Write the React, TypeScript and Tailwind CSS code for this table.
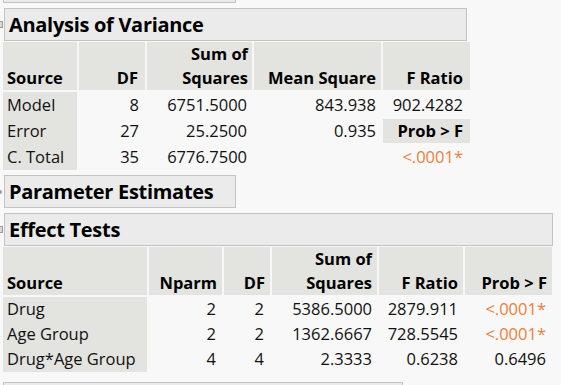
import React from "react";

const font = { fontFamily: '"Open Sans", "Noto Sans", sans-serif' };

function SectionHeader({ title, width, icon }: { title: string; width: string; icon: "box" | "dot" }) {
  return (
    <div className="flex items-center">
      <div className="flex w-[4px] justify-start">
        {icon === "box" ? (
          <div className="h-[7px] w-[3px] border border-l-0 border-[#9a9a9a] bg-[#d8d8d8]" />
        ) : (
          <div className="h-[4px] w-[2px] rounded-r-full bg-[#9a9a9a]" />
        )}
      </div>
      <div
        className={`flex h-[33px] items-center border border-[#c3c3c3] bg-[#ebebeb] pl-[4px] text-[20px] font-bold tracking-[-0.3px] text-black ${width}`}
      >
        {title}
      </div>
    </div>
  );
}

function HeadCell({ children, className = "" }: { children: React.ReactNode; className?: string }) {
  return (
    <div
      className={`flex h-[48px] flex-col items-end justify-end bg-[#e3e3df] text-[16.5px] font-bold leading-[24px] text-black ${className}`}
    >
      {children}
    </div>
  );
}

const orange = "text-[#e8823a]";

export default function App() {
  return (
    <div className="h-[385px] w-[561px] overflow-hidden bg-[#f8f8f8]" style={font}>
      <div className="ml-[3px] h-[3px] w-[233px] border-x border-b border-[#c3c3c3] bg-[#ebebeb]" />

      <div className="mt-[5px]">
        <SectionHeader title="Analysis of Variance" width="w-[463px]" icon="box" />
      </div>

      {/* Analysis of Variance table */}
      <div className="ml-[3px] mt-[1px] grid grid-cols-[74px_66px_105px_127px_87px] gap-x-[2px] text-[16.5px] text-[#111]">
        <HeadCell className="!items-start pl-[4px]">Source</HeadCell>
        <HeadCell className="pr-[7px]">DF</HeadCell>
        <HeadCell className="pr-[4px]">
          <span>Sum of</span>
          <span>Squares</span>
        </HeadCell>
        <HeadCell className="pr-[5px]">Mean Square</HeadCell>
        <HeadCell className="pr-[7px]">F Ratio</HeadCell>

        <div className="col-span-5 h-[2px]" />

        {[
          ["Model", "8", "6751.5000", "843.938", "902.4282"],
          ["Error", "27", "25.2500", "0.935", "prob"],
          ["C. Total", "35", "6776.7500", "", "sig"],
        ].map((r) => (
          <React.Fragment key={r[0]}>
            <div className="flex h-[26px] items-center bg-[#e3e3df] pl-[4px]">{r[0]}</div>
            <div className="flex h-[26px] items-center justify-end pr-[6px]">{r[1]}</div>
            <div className="flex h-[26px] items-center justify-end pr-[5px]">{r[2]}</div>
            <div className="flex h-[26px] items-center justify-end pr-[5px]">{r[3]}</div>
            {r[4] === "prob" ? (
              <div className="flex h-[26px] items-center">
                <div className="flex h-[24px] w-full items-center justify-end bg-[#e3e3df] pr-[7px] font-bold text-black">
                  Prob &gt; F
                </div>
              </div>
            ) : r[4] === "sig" ? (
              <div className={`flex h-[26px] items-center justify-end pr-[7px] ${orange}`}>&lt;.0001*</div>
            ) : (
              <div className="flex h-[26px] items-center justify-end pr-[7px]">{r[4]}</div>
            )}
          </React.Fragment>
        ))}
      </div>

      <div className="mt-[5px]">
        <SectionHeader title="Parameter Estimates" width="w-[232px]" icon="dot" />
      </div>

      <div className="mt-[5px]">
        <SectionHeader title="Effect Tests" width="w-[549px]" icon="box" />
      </div>

      {/* Effect Tests table */}
      <div className="ml-[3px] mt-[1px] grid grid-cols-[144px_73px_46px_105px_84px_87px] gap-x-[2px] text-[16.5px] text-[#111]">
        <HeadCell className="!items-start pl-[4px]">Source</HeadCell>
        <HeadCell className="pr-[5px]">Nparm</HeadCell>
        <HeadCell className="pr-[5px]">DF</HeadCell>
        <HeadCell className="pr-[5px]">
          <span>Sum of</span>
          <span>Squares</span>
        </HeadCell>
        <HeadCell className="pr-[5px]">F Ratio</HeadCell>
        <HeadCell className="pr-[5px]">Prob &gt; F</HeadCell>

        <div className="col-span-6 h-[2px]" />

        {[
          ["Drug", "2", "2", "5386.5000", "2879.911", "<.0001*", true],
          ["Age Group", "2", "2", "1362.6667", "728.5545", "<.0001*", true],
          ["Drug*Age Group", "4", "4", "2.3333", "0.6238", "0.6496", false],
        ].map((r) => (
          <React.Fragment key={r[0] as string}>
            <div className="flex h-[25px] items-center bg-[#e3e3df] pl-[4px]">{r[0]}</div>
            <div className="flex h-[25px] items-center justify-end pr-[6px]">{r[1]}</div>
            <div className="flex h-[25px] items-center justify-end pr-[6px]">{r[2]}</div>
            <div className="flex h-[25px] items-center justify-end pr-[5px]">{r[3]}</div>
            <div className="flex h-[25px] items-center justify-end pr-[5px]">{r[4]}</div>
            <div
              className={`flex h-[25px] items-center justify-end pr-[6px] ${r[6] ? orange : ""}`}
            >
              {r[5]}
            </div>
          </React.Fragment>
        ))}
      </div>

      <div className="ml-[3px] mt-[10px] h-[4px] w-[400px] border-x border-t border-[#c3c3c3] bg-[#ebebeb]" />
    </div>
  );
}
